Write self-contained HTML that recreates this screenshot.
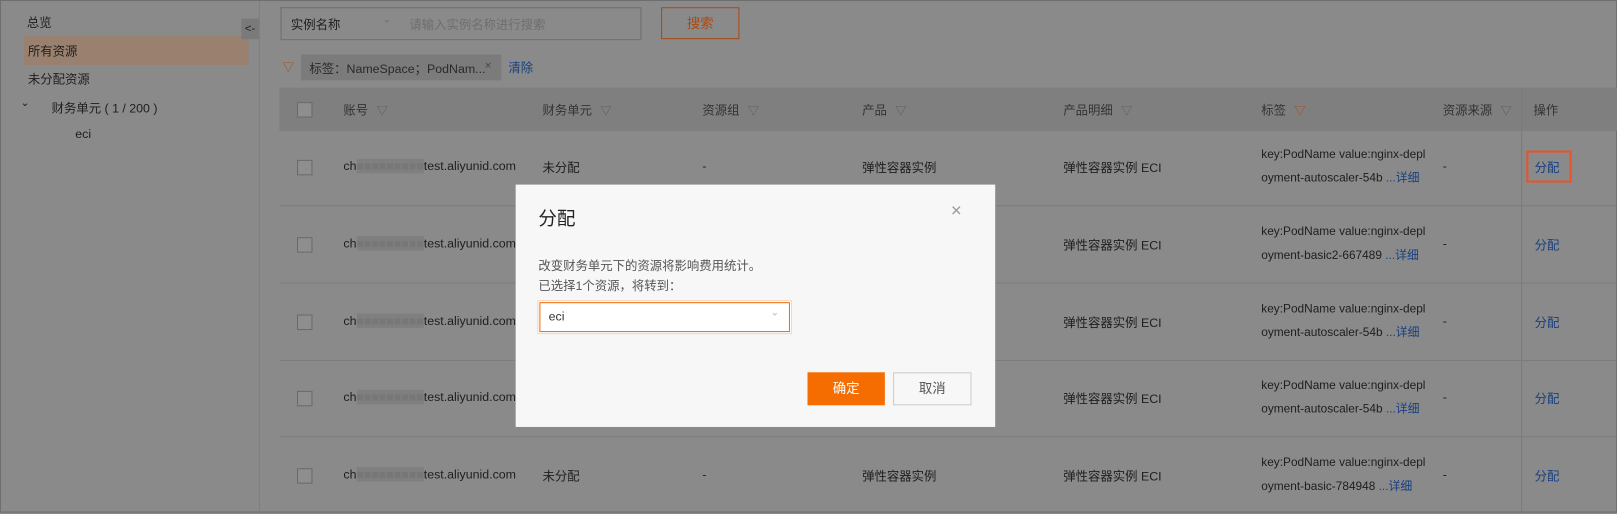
<!DOCTYPE html>
<html style="background:#8a8a8a"><head><meta charset="utf-8"><style>
*{box-sizing:border-box;margin:0;padding:0}
html,body{width:1617px;height:513px;overflow:hidden;background:#8a8a8a}
#w{position:absolute;left:0;top:0;width:1568px;height:497px;transform:scale(1.0313);transform-origin:0 0;background:#8a8a8a;font-family:"Liberation Sans","Noto Sans CJK SC",sans-serif;font-size:12px;color:#1e1e1e;border:1px solid #6e6e6e}
.a{position:absolute;white-space:nowrap}
.f{color:#5a5a5a;font-size:11px;margin-left:8px}
.lk{color:#173f80}
.cb{position:absolute;width:15px;height:15px;border:1px solid #6a6a6a;background:#8e8e8e}
.hl{position:absolute;left:270px;width:1298px;height:1px;background:#7c7c7c}
</style></head><body><div id="w">
<div class="a" style="left:250px;top:0;width:1px;height:497px;background:#7e7e7e"></div>
<div class="a" style="left:25px;top:12px">总览</div>
<div class="a" style="left:22px;top:34px;width:218px;height:28px;background:#99806f"></div>
<div class="a" style="left:26px;top:40px">所有资源</div>
<div class="a" style="left:26px;top:67px">未分配资源</div>
<div class="a" style="left:19px;top:94px;font-size:10px">⌄</div>
<div class="a" style="left:49px;top:95px">财务单元 ( 1 / 200 )</div>
<div class="a" style="left:72px;top:122px">eci</div>
<div class="a" style="left:233px;top:17px;width:17px;height:20px;background:#7a7a7a;font-size:11px;line-height:20px;text-align:center">&lt;-</div>
<div class="a" style="left:271px;top:6px;width:350px;height:32px;border:1px solid #6e6e6e"></div>
<div class="a" style="left:281px;top:14px">实例名称</div>
<div class="a" style="left:370px;top:13px;color:#6e6e6e;font-size:10px">⌄</div>
<div class="a" style="left:396px;top:14px;color:#6e6e6e">请输入实例名称进行搜索</div>
<div class="a" style="left:640px;top:6px;width:76px;height:31px;border:1px solid #a84a14;color:#a84a14;text-align:center;line-height:29px;font-size:13px">搜索</div>
<div class="a" style="left:273px;top:56px;color:#a84a14;font-size:11px">▽</div>
<div class="a" style="left:291px;top:52px;width:194px;height:25px;background:#7b7b7b"></div>
<div class="a" style="left:299px;top:57px;color:#2a2a2a">标签：NameSpace；PodNam...</div>
<div class="a" style="left:469px;top:57px;color:#444;font-size:11px">×</div>
<div class="a lk" style="left:492px;top:56px">清除</div>
<div class="a" style="left:270px;top:84px;width:1298px;height:42px;background:#7f7f7f"></div>
<div class="a" style="left:1474px;top:84px;width:1px;height:413px;background:#7a7a7a"></div>
<div class="cb" style="left:287px;top:98px"></div>
<div class="a" style="left:332px;top:97px;color:#333">账号<span class="f">▽</span></div>
<div class="a" style="left:525px;top:97px;color:#333">财务单元<span class="f">▽</span></div>
<div class="a" style="left:680px;top:97px;color:#333">资源组<span class="f">▽</span></div>
<div class="a" style="left:835px;top:97px;color:#333">产品<span class="f">▽</span></div>
<div class="a" style="left:1030px;top:97px;color:#333">产品明细<span class="f">▽</span></div>
<div class="a" style="left:1222px;top:97px;color:#333">标签<span class="f" style="color:#a84a14">▽</span></div>
<div class="a" style="left:1398px;top:97px;color:#333">资源来源<span class="f">▽</span></div>
<div class="a" style="left:1486px;top:97px;color:#333">操作</div>
<div class="hl" style="top:198px"></div><div class="hl" style="top:273px"></div><div class="hl" style="top:348px"></div><div class="hl" style="top:422px"></div>
<div id="rows"></div>
<div class="a" style="left:1479px;top:145px;width:44px;height:31px;border:2px solid #e8542a"></div>
<div class="a" style="left:499px;top:178px;width:465px;height:235px;background:#f7f7f7"></div>
<div class="a" style="left:521px;top:197px;font-size:18px;color:#222">分配</div>
<div class="a" style="left:921px;top:193px;font-size:18px;color:#999">×</div>
<div class="a" style="left:521px;top:248px;color:#555">改变财务单元下的资源将影响费用统计。</div>
<div class="a" style="left:521px;top:267px;color:#555">已选择1个资源，将转到：</div>
<div class="a" style="left:520px;top:290px;width:247px;height:33px;border:1px solid #fad3b8;background:#fff"></div>
<div class="a" style="left:522px;top:292px;width:243px;height:29px;border:1px solid #f06c10"></div>
<div class="a" style="left:531px;top:299px;color:#333">eci</div>
<div class="a" style="left:746px;top:297px;color:#bbb;font-size:10px">⌄</div>
<div class="a" style="left:782px;top:360px;width:75px;height:32px;background:#f56c00;color:#fff;text-align:center;line-height:32px;font-size:13px">确定</div>
<div class="a" style="left:865px;top:360px;width:76px;height:32px;border:1px solid #ccc;background:#f7f7f7;color:#555;text-align:center;line-height:30px;font-size:13px">取消</div>
</div>
<script>
var ys=[161,236,311,385,460],tg=["autoscaler-54b","basic2-667489","autoscaler-54b","autoscaler-54b","basic-784948"];
var h="";
ys.forEach(function(y,i){
h+='<div class="cb" style="left:287px;top:'+(y-7)+'px"></div>';
h+='<div class="a" style="left:332px;top:'+(y-8)+'px">ch<span style="color:#777;background:#7f7f7f">■■■■■■■■■</span>test.aliyunid.com</div>';
h+='<div class="a" style="left:525px;top:'+(y-8)+'px">未分配</div>';
h+='<div class="a" style="left:680px;top:'+(y-8)+'px">-</div>';
h+='<div class="a" style="left:835px;top:'+(y-8)+'px">弹性容器实例</div>';
h+='<div class="a" style="left:1030px;top:'+(y-8)+'px">弹性容器实例 ECI</div>';
h+='<div class="a" style="left:1222px;top:'+(y-18)+'px;font-size:11.5px">key:PodName value:nginx-depl</div>';
h+='<div class="a" style="left:1222px;top:'+(y+2)+'px;font-size:11.5px">oyment-'+tg[i]+' <span class="lk">...详细</span></div>';
h+='<div class="a" style="left:1398px;top:'+(y-8)+'px">-</div>';
h+='<div class="a lk" style="left:1487px;top:'+(y-8)+'px">分配</div>';
});
document.getElementById('rows').innerHTML=h;
</script>
</body></html>
